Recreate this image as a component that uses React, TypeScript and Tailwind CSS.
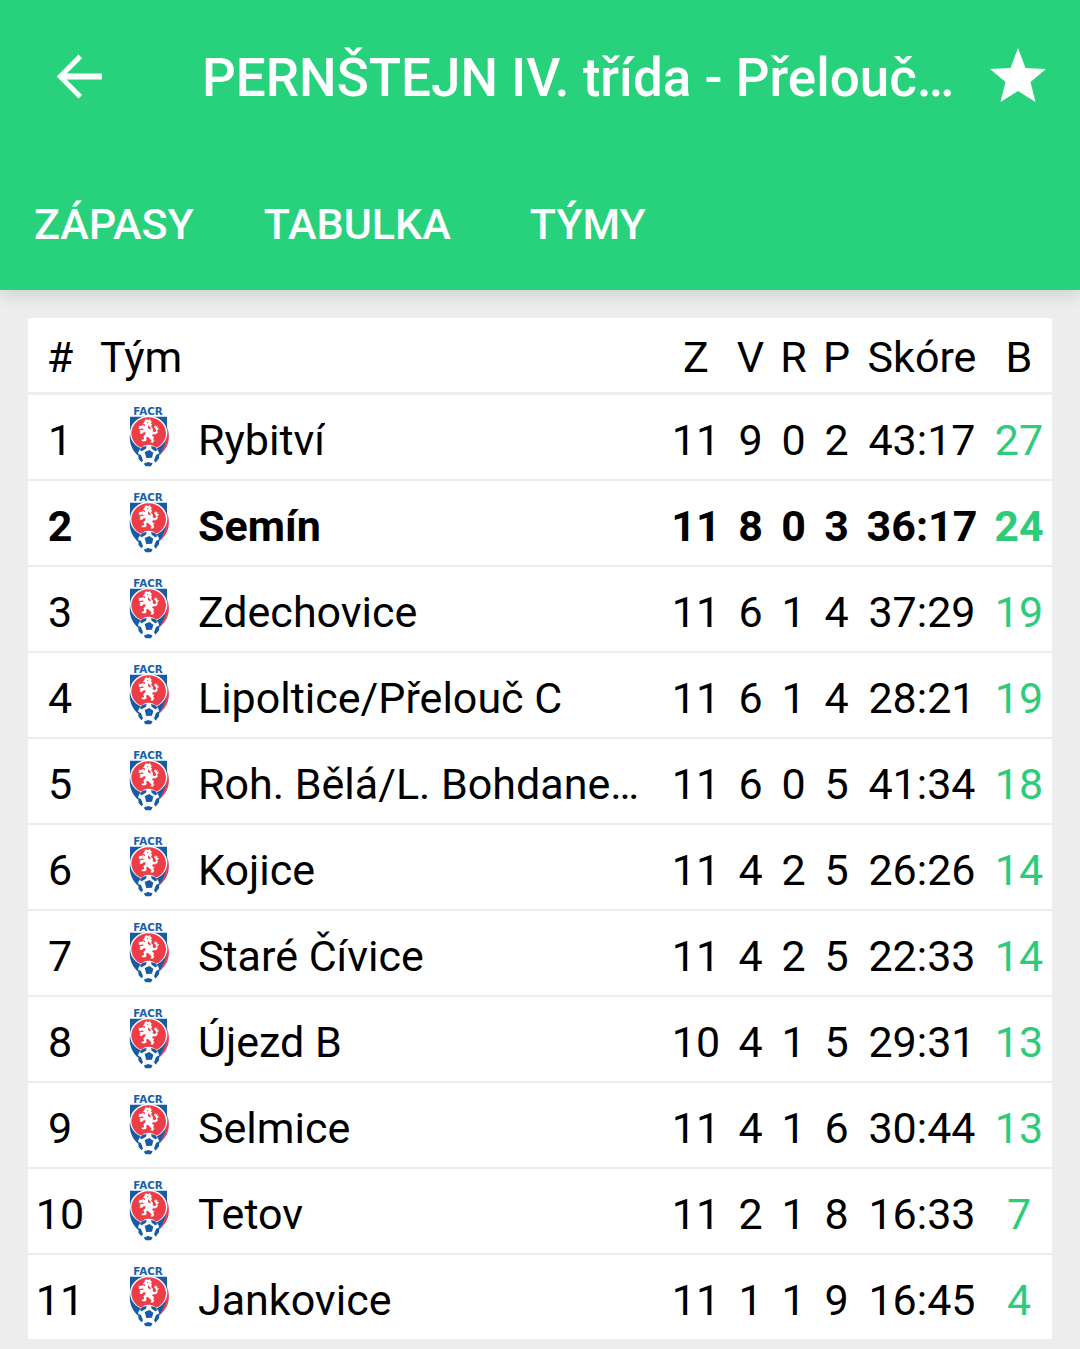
const teams = [
  { name: "Rybitví", played: 11, won: 9, drawn: 0, lost: 2, score: "43:17", points: 27 },
  { name: "Semín", played: 11, won: 8, drawn: 0, lost: 3, score: "36:17", points: 24, active: true },
  { name: "Zdechovice", played: 11, won: 6, drawn: 1, lost: 4, score: "37:29", points: 19 },
  { name: "Lipoltice/Přelouč C", played: 11, won: 6, drawn: 1, lost: 4, score: "28:21", points: 19 },
  { name: "Roh. Bělá/L. Bohdane…", played: 11, won: 6, drawn: 0, lost: 5, score: "41:34", points: 18 },
  { name: "Kojice", played: 11, won: 4, drawn: 2, lost: 5, score: "26:26", points: 14 },
  { name: "Staré Čívice", played: 11, won: 4, drawn: 2, lost: 5, score: "22:33", points: 14 },
  { name: "Újezd B", played: 10, won: 4, drawn: 1, lost: 5, score: "29:31", points: 13 },
  { name: "Selmice", played: 11, won: 4, drawn: 1, lost: 6, score: "30:44", points: 13 },
  { name: "Tetov", played: 11, won: 2, drawn: 1, lost: 8, score: "16:33", points: 7 },
  { name: "Jankovice", played: 11, won: 1, drawn: 1, lost: 9, score: "16:45", points: 4 },
];

const tabs = ["ZÁPASY", "TABULKA", "TÝMY"];

const headings = ["Z", "V", "R", "P", "Skóre", "B"];

function Crest() {
  return (
    <svg viewBox="24 14 126 192" className="h-[64px] w-[42px] shrink-0 overflow-visible" aria-hidden="true">
      <text x="84" y="45" textAnchor="middle" fontSize="31" fontWeight="700" fill="#1560a8" className="font-['DejaVu_Sans']">
        FACR
      </text>
      <path d="M30 49H141V78L143 92C149 130 130 157 112 170L84 174L56 168C38 152 26 130 30 98Z" fill="#155ca5" />
      <path d="M143 84C153 118 143 146 117 165C133 143 140 120 143 84Z" fill="#e4415c" />
      <ellipse cx="86" cy="98" rx="56" ry="51" fill="#fff" />
      <ellipse cx="86" cy="99" rx="52" ry="48" fill="#ee3d47" />
      <path
        d="M80 57L85 60L90 55L92 62L97 65L92 68L96 73L93 79L99 86L98 93L103 96L109 92L107 86L102 80L107 73L106 80L113 76L111 84L118 84L112 90L113 97L107 102L99 102L96 106L103 111L99 116L103 120L99 127L91 126L95 121L90 115L83 109L78 112L80 119L76 123L66 123L65 118L73 117L70 108L76 102L77 96L71 96L65 101L58 99L62 94L58 91L64 89L72 88L67 84L60 87L55 83L59 80L54 76L62 77L70 75L76 78L74 72L68 71L73 66L75 59Z"
        fill="#fff"
      />
      <path d="M81 65L86 66L82 69ZM84 75L92 82L91 88L84 83Z" fill="#ee3d47" />
      <circle cx="86" cy="165" r="32" fill="#fff" />
      <path
        d="M74 155L88 149L100 157L96 172L79 173ZM59 149L68 139L80 137L78 145L65 153ZM93 137L105 140L113 149L106 153L95 145ZM54 160L63 164L69 180L65 186L56 177ZM118 159L117 174L107 187L102 180L108 164ZM71 190L84 185L98 189L93 198L77 198Z"
        fill="#155ca5"
      />
      <path d="M88 149L87 140M100 157L108 153M96 172L103 180M79 173L76 187M74 155L65 152" stroke="#a8c5e2" strokeWidth="1" />
    </svg>
  );
}

export default function App() {
  return (
    <div className="min-h-screen bg-[#ededed] font-['Roboto',sans-serif] text-black">
      <header className="relative bg-[#28d17c] pb-[34px] text-white shadow-[0_4px_16px_rgba(0,0,0,0.14)]">
        <div className="flex h-[152px] items-center pr-[30px] pl-[47px]">
          <button type="button" aria-label="Zpět" className="mr-[92px] shrink-0">
            <svg viewBox="0 0 24 24" fill="currentColor" className="size-[63px]">
              <path d="M20.900 10.900H7.500L13.400 5L12 3.600L3.700 12L12 20.400L13.400 19L7.500 13.100H20.900Z" />
            </svg>
          </button>
          <h1 className="min-w-0 flex-1 truncate pt-[4px] text-[53px] leading-[64px] font-medium">PERNŠTEJN IV. třída - Přelouč…</h1>
          <button type="button" aria-label="Oblíbené" className="shrink-0">
            <svg viewBox="0 0 64 64" fill="currentColor" className="size-[64px]">
              <path d="M32 4L39.500 24L60 25L44.500 38L49.500 58L32 47L14.500 58L19.500 38L4 25L24.500 24Z" />
            </svg>
          </button>
        </div>
        <nav className="flex pt-[40px]">
          {tabs.map((tab) => (
            <button key={tab} type="button" className="min-w-[204px] px-[35px] text-[43px] leading-[64px] font-medium first:pl-[34px]">
              {tab}
            </button>
          ))}
        </nav>
      </header>

      <main className="px-[28px] pt-[28px] pb-[10px]">
        <table className="w-full table-fixed border-separate border-spacing-0 bg-white text-[43px] leading-[50px]">
          <colgroup>
            <col className="w-[64px]" />
            <col />
            <col className="w-[66px]" />
            <col className="w-[43px]" />
            <col className="w-[43px]" />
            <col className="w-[43px]" />
            <col className="w-[128px]" />
            <col className="w-[66px]" />
          </colgroup>
          <thead>
            <tr className="text-center *:h-[77px] *:border-b-3 *:border-[#ededed] *:p-0 *:pt-[4px] *:font-normal">
              <th>#</th>
              <th className="text-left">
                <span className="pl-[8px]">Tým</span>
              </th>
              {headings.map((heading) => (
                <th key={heading}>{heading}</th>
              ))}
            </tr>
          </thead>
          <tbody>
            {teams.map((team, i) => (
              <tr
                key={team.name}
                className={`text-center *:h-[86px] *:border-b-2 *:border-[#ededed] last:*:h-[84px] last:*:border-b-0 ${team.active ? "font-bold" : ""}`}
              >
                <td className="p-0 pt-[6px]">{i + 1}</td>
                <td className="p-0 pl-[36px] text-left">
                  <div className="flex items-center gap-[28px]">
                    <Crest />
                    <span className="min-w-0 truncate pt-[6px]">{team.name}</span>
                  </div>
                </td>
                <td className="p-0 pt-[6px]">{team.played}</td>
                <td className="p-0 pt-[6px]">{team.won}</td>
                <td className="p-0 pt-[6px]">{team.drawn}</td>
                <td className="p-0 pt-[6px]">{team.lost}</td>
                <td className="p-0 pt-[6px]">{team.score}</td>
                <td className="p-0 pt-[6px] text-[#2ecc7a]">{team.points}</td>
              </tr>
            ))}
          </tbody>
        </table>
      </main>
    </div>
  );
}
